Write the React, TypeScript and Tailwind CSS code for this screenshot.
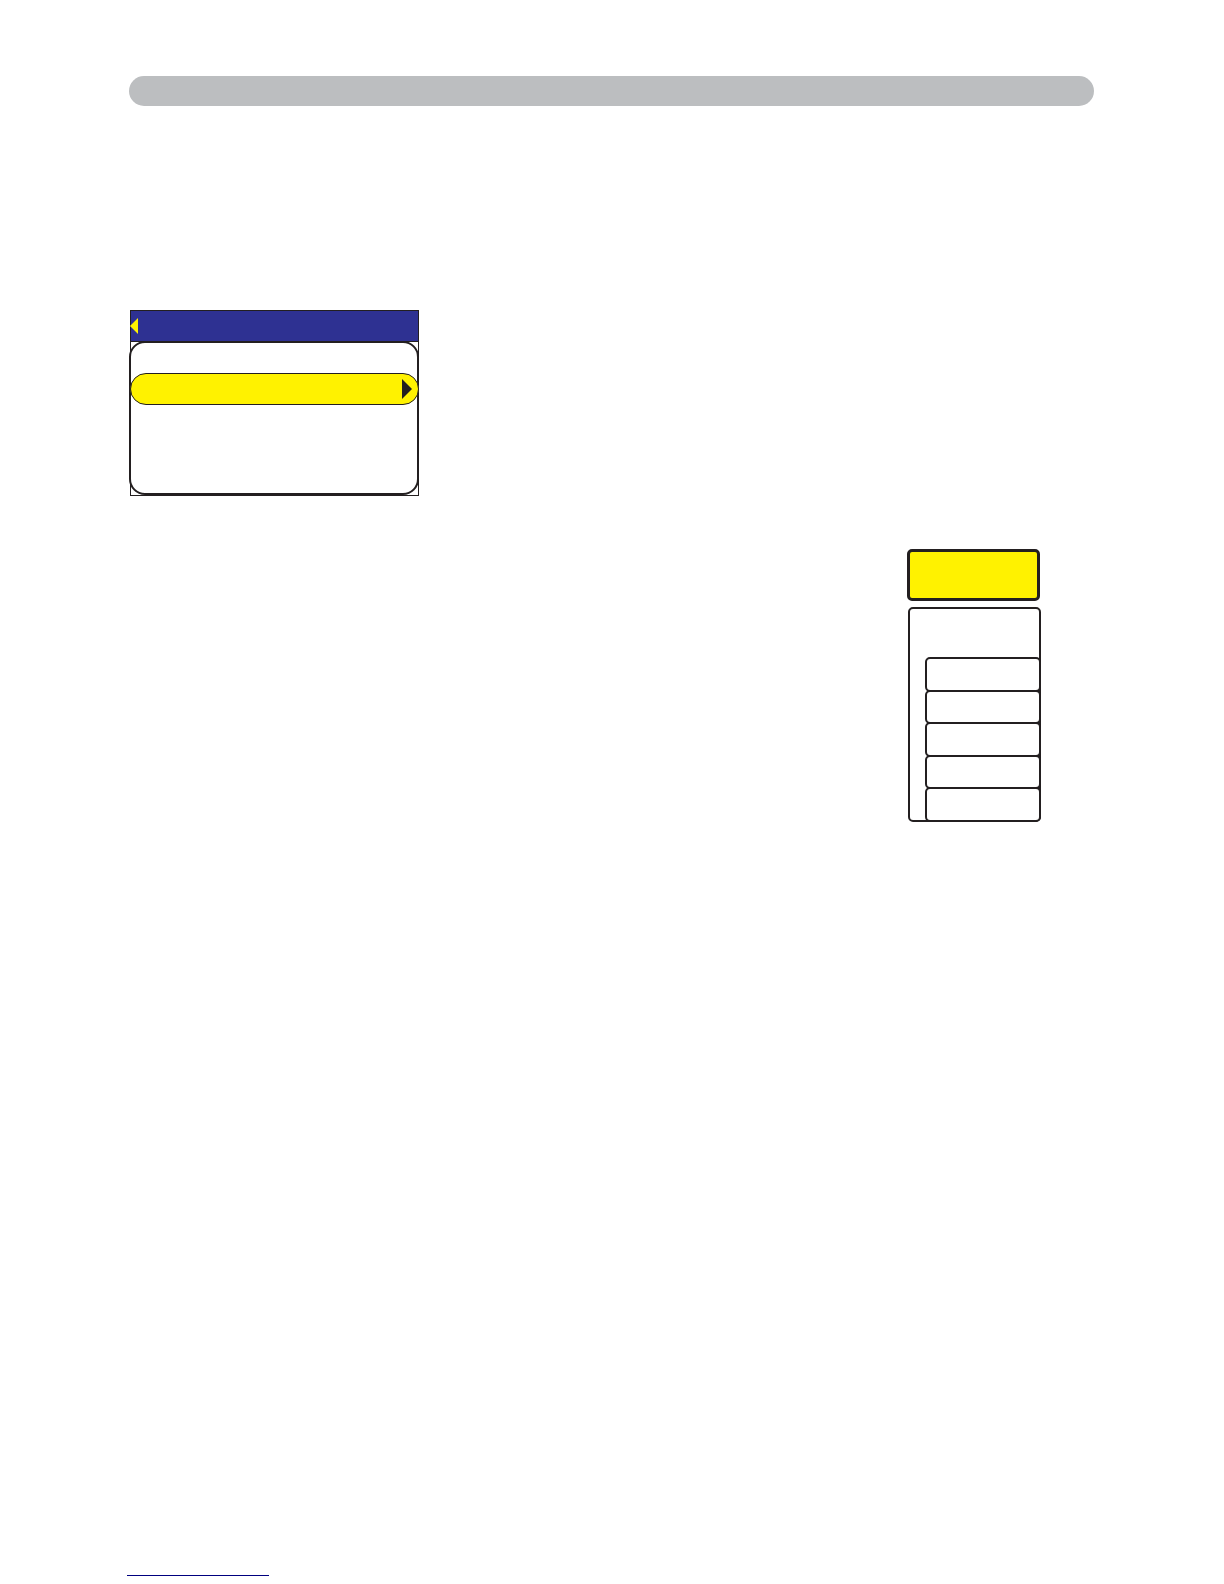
const rows = [1, 2, 3, 4, 5];

function MenuDialog() {
  return (
    <section className="ml-px w-[289px] border border-[#231f20] bg-white">
      <header className="-ml-px flex h-[31px] items-center border-b border-l border-[#231f20] bg-[#2e3192]">
        <button type="button" aria-label="Back" className="-ml-px block">
          <svg width="8" height="16" viewBox="0 0 8 16" className="block">
            <path d="M8 0V16L0 8Z" fill="#fff200" />
          </svg>
        </button>
      </header>
      <div className="-mt-px -mr-px -ml-[2px] h-[154px] rounded-2xl border-2 border-[#231f20] pt-[30px]">
        <button
          type="button"
          aria-label="Selected item"
          className="-ml-px flex h-8 w-[289px] items-center justify-end rounded-full border border-[#231f20] bg-[#fff200] pr-[6px]"
        >
          <svg width="10" height="20" viewBox="0 0 10 20" className="block">
            <path d="M0 0V20L10 10Z" fill="#231f20" />
          </svg>
        </button>
      </div>
    </section>
  );
}

function SideMenu() {
  return (
    <nav aria-label="Menu" className="mr-[53px] w-[134px] self-end">
      <button
        type="button"
        aria-label="Current menu"
        className="block h-[52px] w-[133px] rounded-[5px] border-3 border-[#231f20] bg-[#fff200]"
      />
      <div className="mt-[6px] ml-px rounded-[5px] border-2 border-[#231f20] bg-white pt-12">
        <ul className="-mr-[2px] -mb-[2px] ml-[15px] flex h-[165px] flex-col">
          {rows.map((row) => (
            <li key={row} className="-mt-[2px] flex flex-1 first:mt-0">
              <button
                type="button"
                aria-label={`Item ${row}`}
                className="w-full rounded-[5px] border-2 border-[#231f20] bg-white"
              />
            </li>
          ))}
        </ul>
      </div>
    </nav>
  );
}

export default function App() {
  return (
    <main className="flex min-h-screen flex-col bg-white pt-[76px] pr-[130px] pb-2 pl-[129px] font-['Liberation_Sans',sans-serif]">
      <div className="h-[30px] rounded-full bg-[#bcbec0]" />
      <div className="mt-[204px] flex flex-col gap-[53px]">
        <MenuDialog />
        <SideMenu />
      </div>
      <a
        href="#top"
        aria-label="Back to top"
        className="mt-auto -ml-[2px] block h-5 w-[142px] border-b border-[#00007f]"
      />
    </main>
  );
}
